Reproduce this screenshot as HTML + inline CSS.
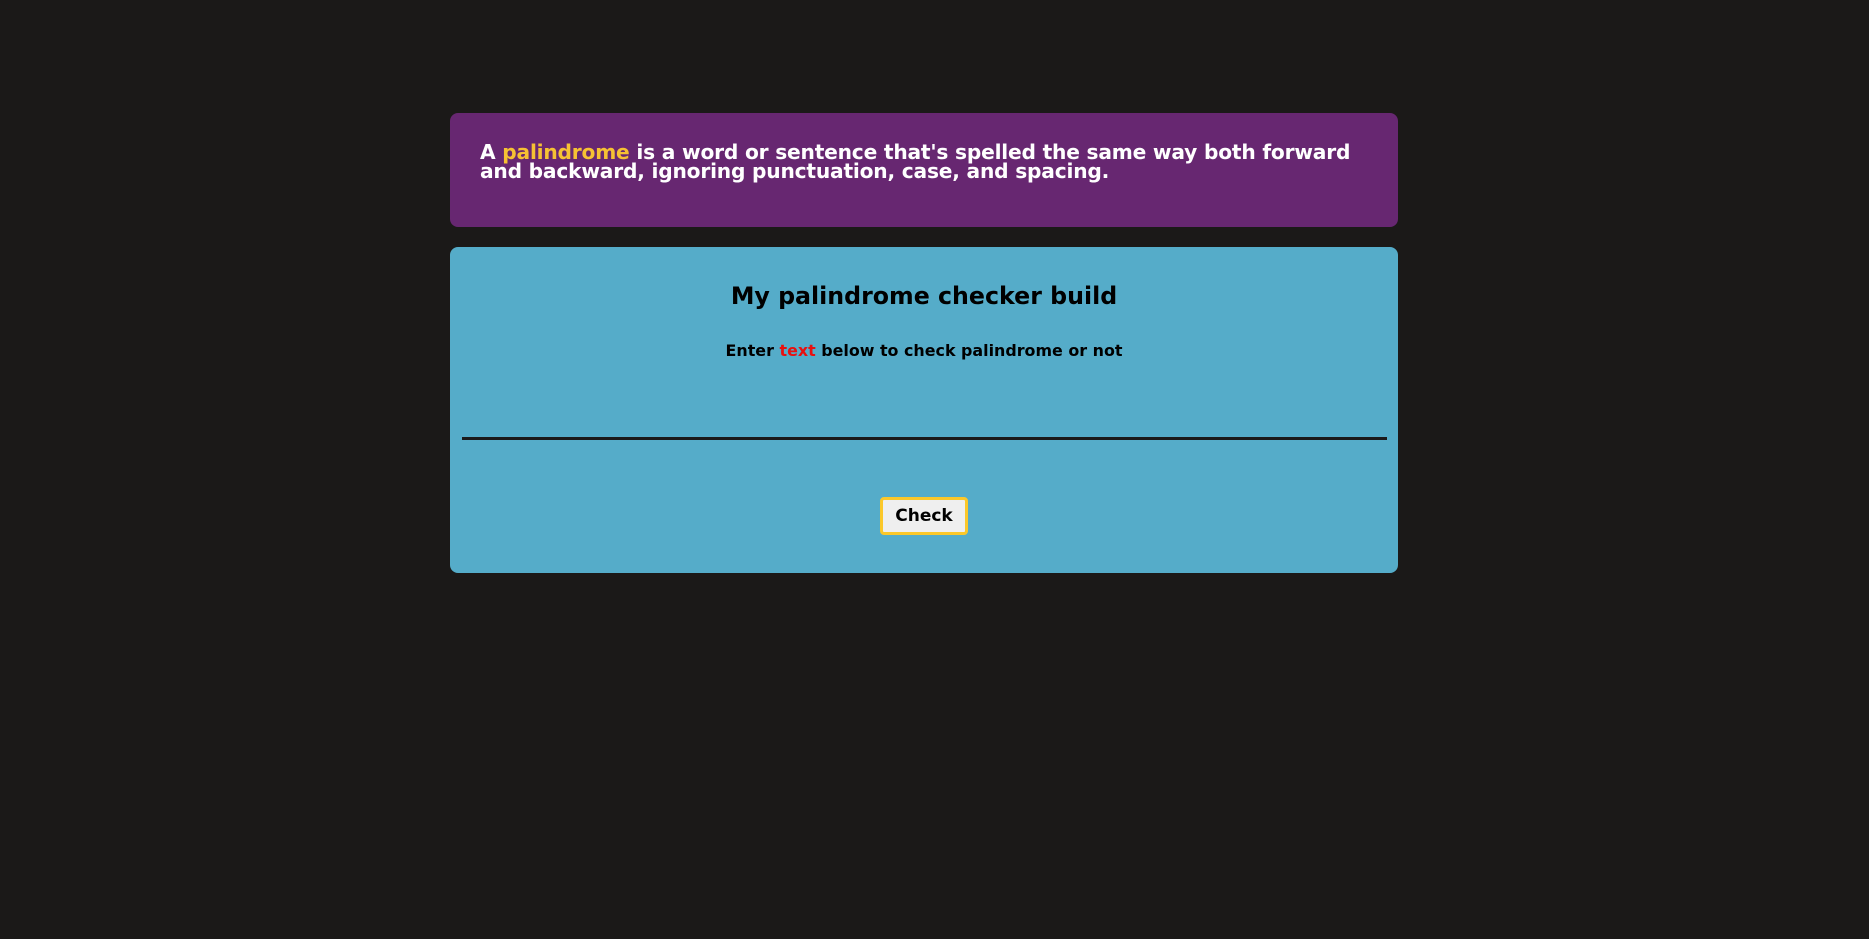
<!DOCTYPE html>
<html><head><style>
html,body{margin:0;padding:0;background:#1b1918;width:1869px;height:939px;overflow:hidden;font-family:"DejaVu Sans","Liberation Sans",sans-serif;}
.p{position:absolute;left:450px;top:113px;width:948px;height:114px;background:#672771;border-radius:8px;box-sizing:border-box;padding:30px 40px 0 30px;color:#fff;font-weight:bold;font-size:20.2px;line-height:19px;letter-spacing:-0.2px}
.p span{color:#f6c133}
.b{position:absolute;left:450px;top:247px;width:948px;height:326px;background:#55acc9;border-radius:8px}
h1{position:absolute;left:450px;width:948px;top:281px;margin:0;text-align:center;font-size:23.7px;font-weight:bold;color:#000;line-height:30px}
.s{position:absolute;left:450px;width:948px;top:340px;text-align:center;font-size:15.9px;font-weight:bold;line-height:22px}
.s span{color:#e81010}
.line{position:absolute;left:462px;width:925px;top:437px;height:3px;background:#1b1a1a}
.btn{position:absolute;left:880px;top:497px;width:88px;height:38px;box-sizing:border-box;border:3px solid #fbc82a;border-radius:4px;background:#efefef;font-weight:bold;font-size:17px;text-align:center;line-height:32px}
</style></head><body>
<div class="p">A <span>palindrome</span> is a word or sentence that's spelled the same way both forward and backward, ignoring punctuation, case, and spacing.</div>
<div class="b"></div>
<h1>My palindrome checker build</h1>
<div class="s">Enter <span>text</span> below to check palindrome or not</div>
<div class="line"></div>
<div class="btn">Check</div>
</body></html>
